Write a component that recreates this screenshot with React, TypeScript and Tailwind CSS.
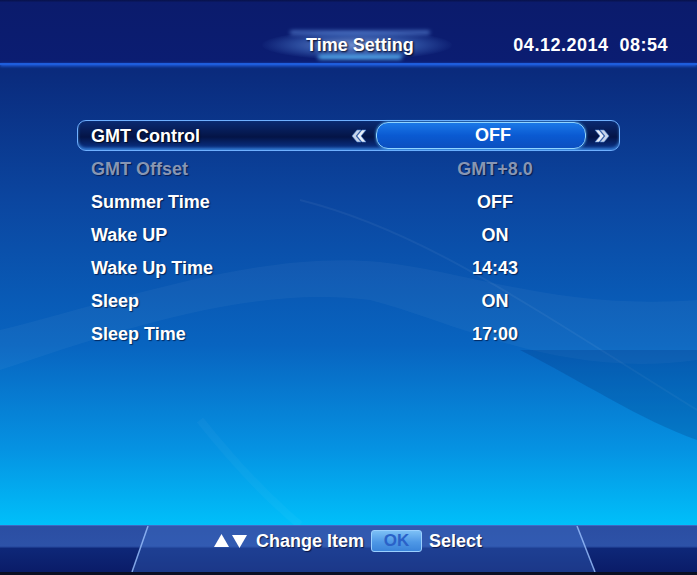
import React from 'react'

const rows = [
  { label: 'GMT Control', value: 'OFF', active: true },
  { label: 'GMT Offset', value: 'GMT+8.0', disabled: true },
  { label: 'Summer Time', value: 'OFF' },
  { label: 'Wake UP', value: 'ON' },
  { label: 'Wake Up Time', value: '14:43' },
  { label: 'Sleep', value: 'ON' },
  { label: 'Sleep Time', value: '17:00' },
]

function Chevrons({ dir }: { dir: 'left' | 'right' }) {
  const flip = dir === 'left' ? 'scale(-1,1) translate(-16,0)' : undefined
  return (
    <svg width="16" height="14" viewBox="0 0 16 14">
      <g transform={flip}>
        <polygon points="1,1 5,1 10,7 5,13 1,13 6,7" fill="#e8eef8" stroke="#4a7fd0" strokeWidth="0.6" />
        <polygon points="6,1 10,1 15,7 10,13 6,13 11,7" fill="#c9d6ea" stroke="#4a7fd0" strokeWidth="0.6" />
      </g>
    </svg>
  )
}

function Waves() {
  return (
    <svg className="absolute inset-0 pointer-events-none" width="697" height="575" viewBox="0 0 697 575">
      <path d="M0 330 C 120 300, 260 250, 380 262 C 470 272, 560 310, 697 300 L 697 360 C 560 380, 450 320, 370 300 C 250 285, 120 330, 0 370 Z" fill="#ffffff" opacity="0.04" />
      <path d="M300 200 C 420 230, 520 300, 697 410" stroke="#ffffff" strokeWidth="2" fill="none" opacity="0.05" />
      <path d="M520 350 C 580 380, 640 420, 697 440 L 697 350 Z" fill="#001a60" opacity="0.18" />
      <path d="M200 420 C 240 470, 270 500, 300 525" stroke="#ffffff" strokeWidth="8" fill="none" opacity="0.03" />
    </svg>
  )
}

export default function App() {
  return (
    <div className="relative w-[697px] h-[575px] overflow-hidden flex flex-col font-['Liberation_Sans',Arial,sans-serif] font-bold text-white bg-[linear-gradient(180deg,#0a1d70_0%,#0a2a7c_12%,#0b46a0_35%,#0864c0_60%,#0592e2_78%,#00c2fb_92%)]">
      <Waves />

      <header className="relative h-[63px] flex items-start bg-[linear-gradient(180deg,#08124a_0%,#0b1b6c_4%,#0b1d72_100%)]">
        <div className="absolute left-[262px] top-[30px] w-[190px] h-[30px] rounded-[50%] bg-[radial-gradient(ellipse_at_center,#6f8fd0_0%,#2a4a9c_45%,transparent_72%)]" />
        <div className="absolute left-[290px] top-[31px] w-[140px] h-[3px] rounded-full bg-[#7ab0ff] opacity-70 blur-[2px]" />
        <div className="absolute left-[318px] top-[55px] w-[84px] h-[4px] rounded-full bg-[#5ec0ff] blur-[2px]" />
        <div className="relative pl-[306px] pt-[34px] text-[18px] leading-[22px] [text-shadow:1px_1px_2px_rgba(0,0,20,0.9)]">
          Time Setting
        </div>
        <div className="relative ml-auto pr-[29px] pt-[34px] text-[18px] leading-[22px] tracking-[0.5px]">
          04.12.2014&nbsp;&nbsp;08:54
        </div>
      </header>
      <div className="relative h-[2px] bg-[#1e5ddc] shadow-[0_1px_3px_#2a70ff]" />

      <main className="relative pt-[54px] px-[77px]">
        {rows.map((r) =>
          r.active ? (
            <div key={r.label} className="h-[33px] flex items-center">
              <div className="w-full h-[31px] flex items-center rounded-[9px] border border-[#6fb0ff] bg-[linear-gradient(180deg,#0a2a72_0%,#041446_55%,#0a3590_100%)] shadow-[inset_0_-2px_3px_rgba(80,170,255,0.6)] text-[18px]">
                <span className="flex-1 pl-[13px] leading-[20px] [text-shadow:1px_1px_1px_rgba(0,0,0,0.7)]">{r.label}</span>
                <Chevrons dir="left" />
                <div className="ml-[9px] w-[210px] h-[27px] flex items-center justify-center pl-[24px] rounded-[12px] border border-[#8fd4ff] bg-[linear-gradient(180deg,#1a78e8_0%,#0a5ad2_50%,#0b4fc0_100%)] shadow-[0_0_3px_#4ab0ff]">
                  OFF
                </div>
                <span className="ml-[8px] mr-[9px]">
                  <Chevrons dir="right" />
                </span>
              </div>
            </div>
          ) : (
            <div
              key={r.label}
              className={`h-[33px] flex items-center text-[18px] leading-[20px] [text-shadow:1px_1px_1px_rgba(0,0,30,0.6)] ${r.disabled ? 'text-[#8796b4]' : 'text-white'}`}
            >
              <span className="w-[328px] pl-[14px]">{r.label}</span>
              <span className="w-[180px] text-center">{r.value}</span>
            </div>
          )
        )}
      </main>

      <footer className="relative mt-auto h-[50px] flex flex-col">
        <div className="relative h-[47px] bg-[linear-gradient(180deg,#2b4ea2_0%,#2d52a8_45%,#0e2778_50%,#0a1c68_100%)]">
          <svg className="absolute inset-0" width="697" height="47" viewBox="0 0 697 47">
            <polygon points="148,0 577,0 595,47 132,47" fill="#3d6cc6" opacity="0.35" />
            <line x1="148" y1="1" x2="132" y2="47" stroke="#9cc2ff" strokeWidth="1.5" opacity="0.8" />
            <line x1="577" y1="1" x2="595" y2="47" stroke="#9cc2ff" strokeWidth="1.5" opacity="0.8" />
            <line x1="0" y1="0.5" x2="697" y2="0.5" stroke="#4a7ad8" strokeWidth="1" opacity="0.6" />
          </svg>
          <div className="relative flex items-center pt-[5px] pl-[213px] text-[18px] leading-[22px] [text-shadow:1px_1px_1px_rgba(0,0,30,0.7)]">
            <svg width="36" height="16" viewBox="0 0 36 16" className="mr-[7px]">
              <polygon points="1,14 8.5,1 16,14" fill="#ffffff" />
              <polygon points="19,2 34,2 26.5,15" fill="#ffffff" />
            </svg>
            <span>Change Item</span>
            <span className="ml-[7px] w-[51px] h-[22px] flex items-center justify-center rounded-[3px] border border-[#9ad0ff] bg-[linear-gradient(180deg,#7cc0f6_0%,#4e98e6_55%,#3a84da_100%)] text-[#2a62c8] text-[17px] [text-shadow:none]">
              OK
            </span>
            <span className="ml-[7px]">Select</span>
          </div>
        </div>
        <div className="h-[3px] bg-[#0a0f24]" />
      </footer>
    </div>
  )
}
